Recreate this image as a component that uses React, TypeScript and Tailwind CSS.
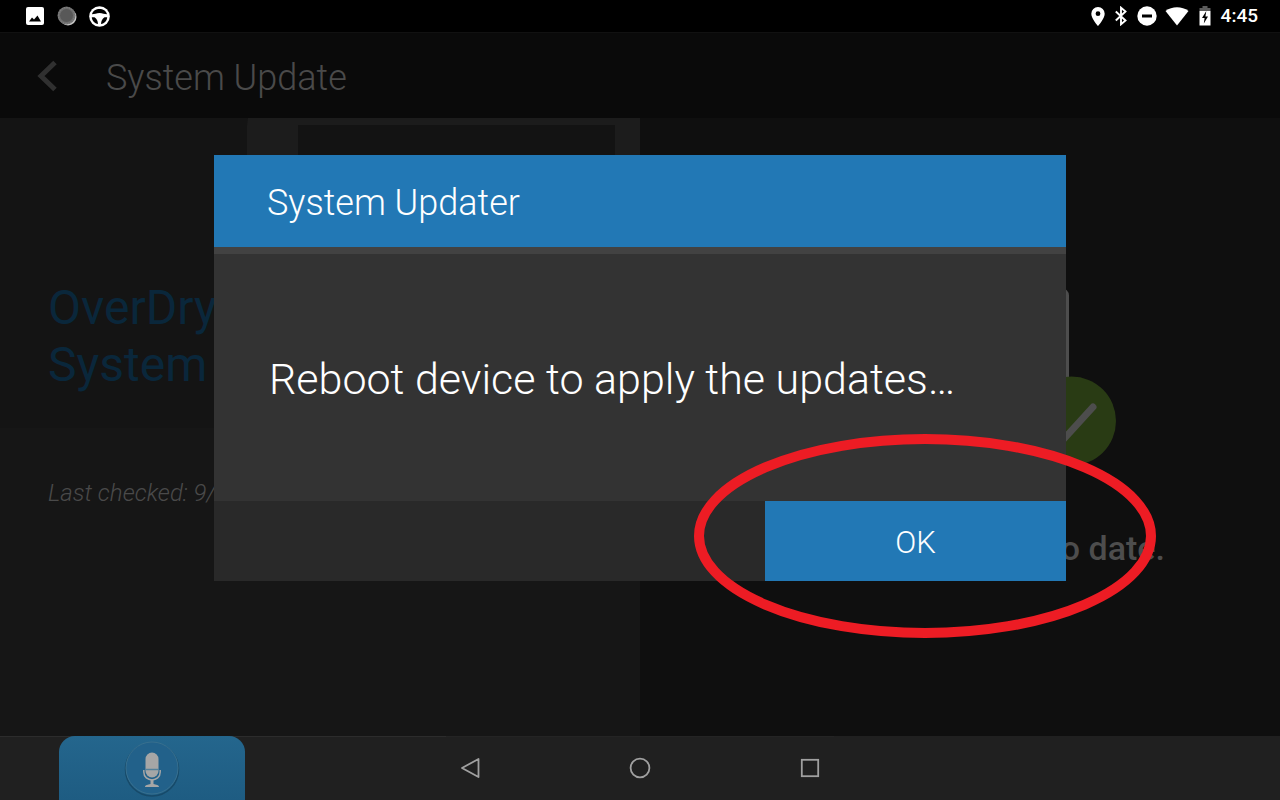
import React from 'react';

function StatusBar() {
  return (
    <div className="h-8 bg-black flex items-center justify-between pl-[26px] pr-[22px] text-white">
      <div className="flex items-center gap-3">
        {/* Screenshot saved */}
        <svg width="18" height="18" viewBox="0 0 18 18">
          <rect width="18" height="18" rx="2" fill="#fff" />
          <path d="M3 14.500 L6 10.500 L8 12.500 L11.500 8.500 L15 14.500 Z" fill="#000" />
        </svg>
        <svg width="21" height="20" viewBox="0 0 21 20">
          <circle cx="12" cy="11" r="8.500" fill="#c4c4c4" />
          <circle cx="10.500" cy="9.500" r="9" fill="#6f6f6f" />
          <circle cx="10.500" cy="9.500" r="8" fill="none" stroke="#8a8a8a" strokeWidth="1" strokeDasharray="1 1.500" />
          <circle cx="10.500" cy="9.500" r="6.500" fill="#585858" />
        </svg>
        {/* Driving mode */}
        <svg width="21" height="21" viewBox="0 0 21 21">
          <circle cx="10.500" cy="10.500" r="10.300" fill="#fff" />
          <path d="M3 8.300 C4.500 1.300 16.500 1.300 18 8.300 C15.500 8.300 13.500 7 10.500 7 C7.500 7 5.500 8.300 3 8.300 Z" fill="#000" />
          <path d="M2.800 11.300 H5.500 C7.700 12.800 8.800 14.800 9 18.100 C5.500 17.500 3 14.800 2.800 11.300 Z" fill="#000" />
          <path d="M18.200 11.300 H15.500 C13.300 12.800 12.200 14.800 12 18.100 C15.500 17.500 18 14.800 18.200 11.300 Z" fill="#000" />
        </svg>
      </div>
      <div className="flex items-center">
        <svg width="14" height="19" viewBox="0 0 14 19">
          <path
            fillRule="evenodd"
            d="M7 0 A6.700 6.700 0 0 0 .3 6.700 C.3 11.500 7 19 7 19 S13.700 11.500 13.700 6.700 A6.700 6.700 0 0 0 7 0 Z M7 4.300 A2.400 2.400 0 1 1 7 9.100 A2.400 2.400 0 1 1 7 4.300 Z"
            fill="#fff"
          />
        </svg>
        <svg className="ml-[10px]" width="12" height="20" viewBox="0 0 12 20" fill="none" stroke="#fff" strokeWidth="1.900">
          <path d="M.8 5.500 L10.500 14.500 L6 18.300 V1.700 L10.500 5.500 L.8 14.500" />
        </svg>
        <svg className="ml-[10px]" width="20" height="20" viewBox="0 0 20 20">
          <circle cx="10" cy="10" r="9.700" fill="#fff" />
          <rect x="5" y="8.500" width="10" height="3" fill="#000" />
        </svg>
        <svg className="ml-2" width="24" height="19" viewBox="0 0 24 19">
          <path d="M.500 4 C7 -1 17 -1 23.500 4 L12 18.500 Z" fill="#fff" />
        </svg>
        <svg className="ml-[10px]" width="12" height="20" viewBox="0 0 12 20">
          <path d="M3.500 0 H8.500 V2 H11.500 V5 H.500 V2 H3.500 Z" fill="#5c5c5c" />
          <path d="M.500 5 H11.500 V19.500 H.500 Z" fill="#fff" />
          <path d="M7.300 5 L3 12 H5.600 L4.800 17.500 L9 10.500 H6.400 Z" fill="#000" />
        </svg>
        <span className="ml-[10px] text-[19px] leading-6 font-medium">4:45</span>
      </div>
    </div>
  );
}

function UpdatePanel() {
  return (
    <section className="relative flex-1 flex flex-col bg-[#161616]">
      {/* Tablet artwork running off the top of the panel */}
      <svg className="absolute top-0 right-0" width="394" height="60" viewBox="0 0 394 60">
        <path d="M2 0 H394 V60 H1 V8 Z" fill="#1c1c1c" />
        <rect x="52" y="7" width="317" height="53" fill="#131313" />
      </svg>
      <div className="h-[310px] bg-[#141414] pl-12 pt-[161px]">
        <h2 className="text-[48px] leading-[57px] text-[#0a273b]">
          OverDry
          <br />
          System
        </h2>
      </div>
      <p className="pl-12 pt-[49px] text-[24px] leading-8 font-light italic text-[#4a4a4a]">Last checked: 9/</p>
    </section>
  );
}

function StatusPanel() {
  return (
    <section className="flex-1 flex flex-col items-center bg-[#0f0f0f] pt-[170px]">
      <svg width="312" height="178" viewBox="0 0 312 178" fill="none">
        <rect x="48.500" y="1.500" width="215" height="150" rx="6" stroke="#4d4d4d" strokeWidth="3" />
        <circle cx="267.500" cy="133" r="44.500" fill="#293b14" />
        <path d="M244 136 L258 153 L289 119" stroke="#4d4d4d" strokeWidth="7" strokeLinecap="round" strokeLinejoin="round" />
      </svg>
      <p className="mt-[62px] w-[410px] text-right text-[34px] leading-10 font-medium text-[#4d4d4d]">to date.</p>
    </section>
  );
}

function RebootDialog() {
  return (
    <div className="absolute inset-0 flex items-center justify-center">
      <div role="dialog" aria-labelledby="dialog-title" className="w-2/3 max-w-[852px] text-white font-light">
        <h2 id="dialog-title" className="h-[92px] bg-[#2278b5] pl-[53px] flex items-center pt-1 text-[36px] leading-10">
          System Updater
        </h2>
        <div className="h-[254px] bg-[#333333] border-t-[7px] border-[#424242] pl-[55px] pt-0.5 flex items-center">
          <p className="text-[43px] leading-[52px]">Reboot device to apply the updates…</p>
        </div>
        <div className="relative h-20 bg-[#292929] flex justify-end">
          <button type="button" className="w-[301px] bg-[#2278b5] text-[31px] leading-10 pt-1">
            OK
          </button>
          {/* Highlight ring around the confirm button */}
          <svg
            className="absolute -right-[90px] -top-[67px] pointer-events-none"
            width="462"
            height="204"
            viewBox="0 0 462 204"
            fill="none"
          >
            <ellipse cx="231" cy="102" rx="226" ry="97" stroke="#ed1c24" strokeWidth="10" />
          </svg>
        </div>
      </div>
    </div>
  );
}

function NavBar() {
  return (
    <nav className="h-16 grid grid-cols-[1fr_auto_1fr] bg-[#202020]">
      <div className="border-t border-[#2c2c2c] pl-[59px]">
        <button
          type="button"
          aria-label="Voice"
          className="-mt-px w-[186px] h-16 rounded-t-2xl bg-linear-to-b from-[#24668d] to-[#1e5c82] flex justify-center pt-[5px]"
        >
          <svg width="56" height="58" viewBox="0 0 56 58" fill="none">
            <circle cx="28" cy="28.500" r="26.500" stroke="#174a69" strokeWidth="1.500" />
            <circle cx="28" cy="27" r="26" fill="#22618a" stroke="#38708f" strokeWidth="1" />
            <rect x="21.500" y="11.500" width="13" height="25" rx="6.500" fill="#a6a6a6" />
            <path d="M21 28.500 H35" stroke="#55809a" strokeWidth="1.500" />
            <path d="M19.800 29 V31 C19.800 41.500 36.200 41.500 36.200 31 V29" stroke="#a6a6a6" strokeWidth="1.500" />
            <path d="M26.500 38.500 H29.500 V43 C32 43.500 35 44 35 46 H21 C21 44 24 43.500 26.500 43 Z" fill="#a6a6a6" />
          </svg>
        </button>
      </div>
      <div className="flex items-center gap-[122px] border-t border-[#242424] pb-0.5">
        <button type="button" aria-label="Back" className="size-12 flex items-center justify-center">
          <svg width="24" height="24" viewBox="0 0 24 24" fill="none" stroke="#a0a0a0" strokeWidth="1.800">
            <path d="M20.500 3 V21 L4 12 Z" strokeLinejoin="round" />
          </svg>
        </button>
        <button type="button" aria-label="Home" className="size-12 flex items-center justify-center">
          <svg width="24" height="24" viewBox="0 0 24 24" fill="none" stroke="#a0a0a0" strokeWidth="1.800">
            <circle cx="12" cy="12" r="9.400" />
          </svg>
        </button>
        <button type="button" aria-label="Recent apps" className="size-12 flex items-center justify-center">
          <svg width="24" height="24" viewBox="0 0 24 24" fill="none" stroke="#a0a0a0" strokeWidth="1.800">
            <rect x="3.800" y="3.800" width="16.400" height="16.400" />
          </svg>
        </button>
      </div>
      <div className="border-t border-[#202020]" />
    </nav>
  );
}

export default function App() {
  return (
    <div className="min-h-screen flex flex-col bg-black font-[Roboto,sans-serif]">
      <div className="relative flex-1 flex flex-col">
        <StatusBar />
        <header className="h-[86px] bg-[#0a0a0a] border-t border-[#111111] flex items-center pl-[35px]">
          <button type="button" aria-label="Go back" className="size-8">
            <svg width="24" height="32" viewBox="0 0 24 32" fill="none" stroke="#303030" strokeWidth="5">
              <path d="M20 2.500 L6 16 L20 29.500" />
            </svg>
          </button>
          <h1 className="pl-[39px] pt-1 text-[36px] leading-10 font-light text-[#4a4a4a]">System Update</h1>
        </header>
        <main className="flex-1 flex">
          <UpdatePanel />
          <StatusPanel />
        </main>
        <RebootDialog />
      </div>
      <NavBar />
    </div>
  );
}
